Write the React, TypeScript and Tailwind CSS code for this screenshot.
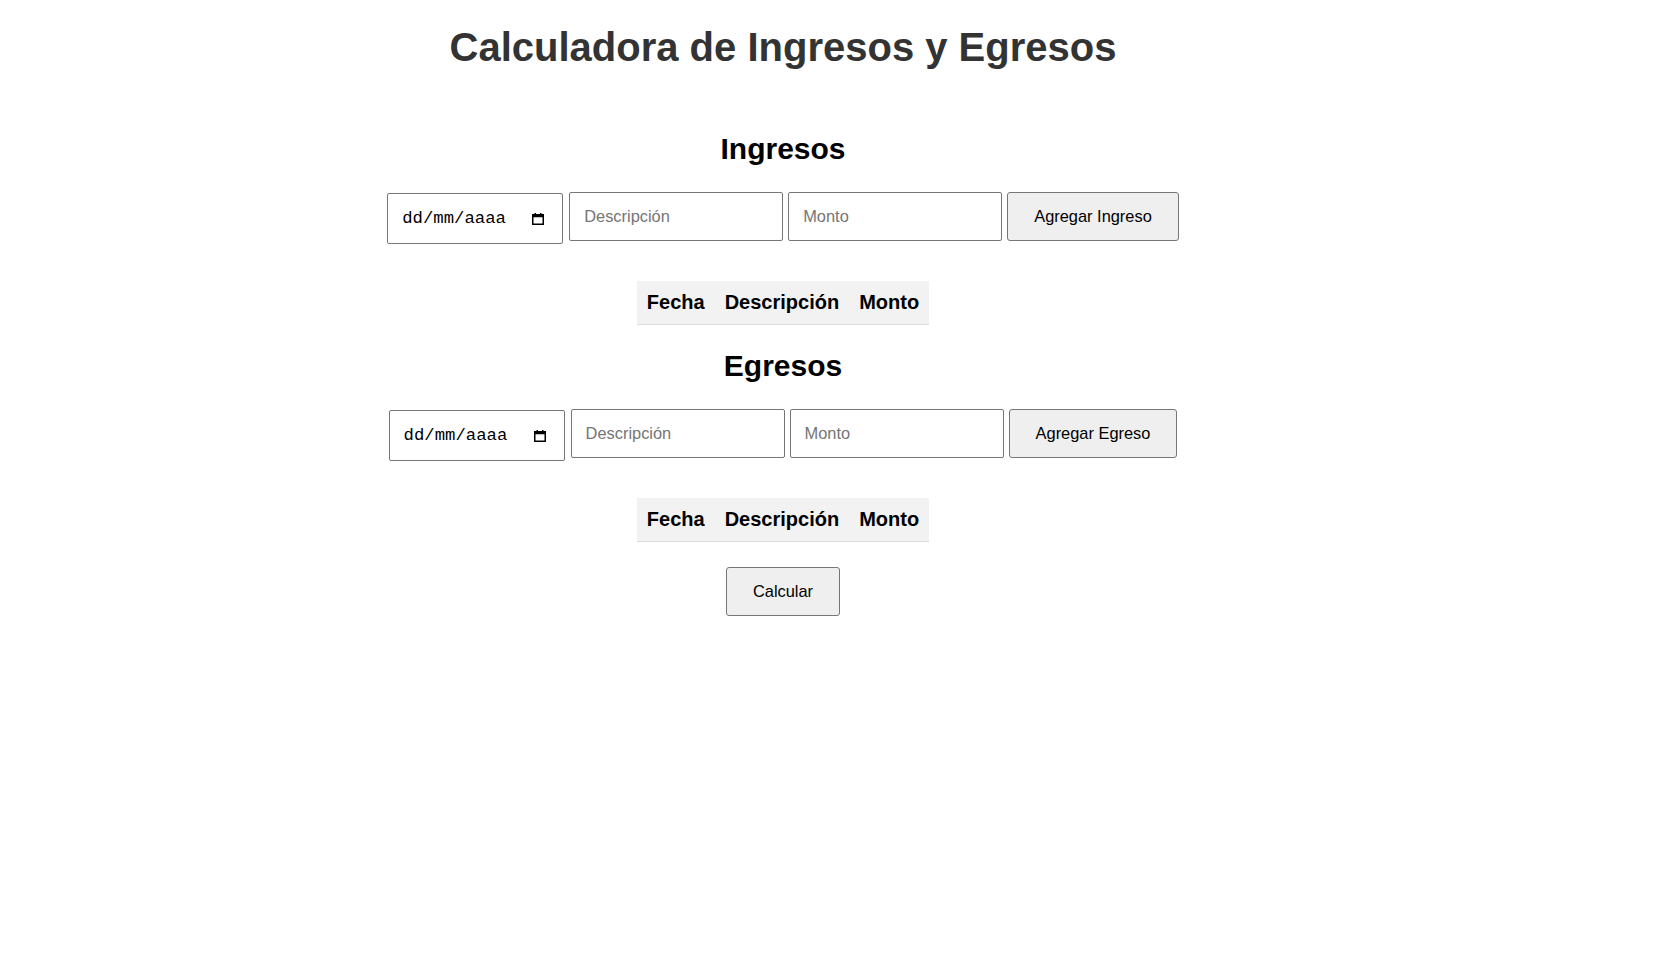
import { useState } from 'react';

interface Movimiento {
  fecha: string;
  descripcion: string;
  monto: number;
}

const CalendarIcon = () => (
  <svg width="12" height="12" viewBox="0 0 12 12" className="shrink-0">
    <rect x="2.5" y="0" width="1.5" height="2.5" fill="#000" />
    <rect x="8" y="0" width="1.5" height="2.5" fill="#000" />
    <rect x="0.75" y="1.75" width="10.5" height="9.5" fill="none" stroke="#000" strokeWidth="1.5" />
    <rect x="0.75" y="1.75" width="10.5" height="2.5" fill="#000" />
  </svg>
);

interface SeccionProps {
  titulo: string;
  textoBoton: string;
  items: Movimiento[];
  margenArriba: string;
}

const Seccion = ({ titulo, textoBoton, items, margenArriba }: SeccionProps) => {
  return (
    <section className={margenArriba}>
      <h2 className="text-[30px] leading-[34px] font-bold text-black">{titulo}</h2>

      <div className="mt-[26.5px] flex justify-center items-start h-[52px]">
        <div className="w-[176px] h-[51px] mt-px border border-[#767676] rounded-[2px] flex items-center justify-between pl-[14px] pr-[18px] bg-white">
          <span className="font-['Liberation_Mono','DejaVu_Sans_Mono',monospace] text-[17.3px] text-black">dd/mm/aaaa</span>
          <CalendarIcon />
        </div>
        <input
          type="text"
          placeholder="Descripción"
          className="ml-[6px] w-[214px] h-[49px] border border-[#767676] rounded-[2px] px-[14px] text-[16.4px] text-black placeholder:text-[#757575] outline-none"
        />
        <input
          type="number"
          placeholder="Monto"
          className="ml-[5px] w-[214px] h-[49px] border border-[#767676] rounded-[2px] px-[14px] text-[16.4px] text-black placeholder:text-[#757575] outline-none"
        />
        <button className="ml-[5px] h-[49px] px-[26px] bg-[#efefef] border border-[#767676] rounded-[3px] text-[16.4px] text-black">
          {textoBoton}
        </button>
      </div>

      <table className="mx-auto mt-[37px] border-collapse">
        <thead>
          <tr className="bg-[#f2f2f2] border-b border-[#dddddd]">
            <th className="px-[10px] py-[10px] text-[20px] leading-[23px] font-bold text-black">Fecha</th>
            <th className="px-[10px] py-[10px] text-[20px] leading-[23px] font-bold text-black">Descripción</th>
            <th className="px-[10px] py-[10px] text-[20px] leading-[23px] font-bold text-black">Monto</th>
          </tr>
        </thead>
        <tbody>
          {items.map((item, i) => (
            <tr key={i}>
              <td className="px-[10px] py-[10px]">{item.fecha}</td>
              <td className="px-[10px] py-[10px]">{item.descripcion}</td>
              <td className="px-[10px] py-[10px]">{item.monto}</td>
            </tr>
          ))}
        </tbody>
      </table>
    </section>
  );
};

const App = () => {
  const [ingresos] = useState<Movimiento[]>([]);
  const [egresos] = useState<Movimiento[]>([]);

  return (
    <div className="w-[1566px] text-center font-['Liberation_Sans',Arial,sans-serif] bg-white min-h-screen">
      <h1 className="pt-[24px] text-[40px] leading-[46px] font-bold text-[#333333]">
        Calculadora de Ingresos y Egresos
      </h1>

      <Seccion titulo="Ingresos" textoBoton="Agregar Ingreso" items={ingresos} margenArriba="mt-[61.5px]" />
      <Seccion titulo="Egresos" textoBoton="Agregar Egreso" items={egresos} margenArriba="mt-[23.5px]" />

      <button className="mt-[25px] h-[49px] px-[26px] bg-[#efefef] border border-[#767676] rounded-[3px] text-[16.4px] text-black">
        Calcular
      </button>
    </div>
  );
};

export default App;
